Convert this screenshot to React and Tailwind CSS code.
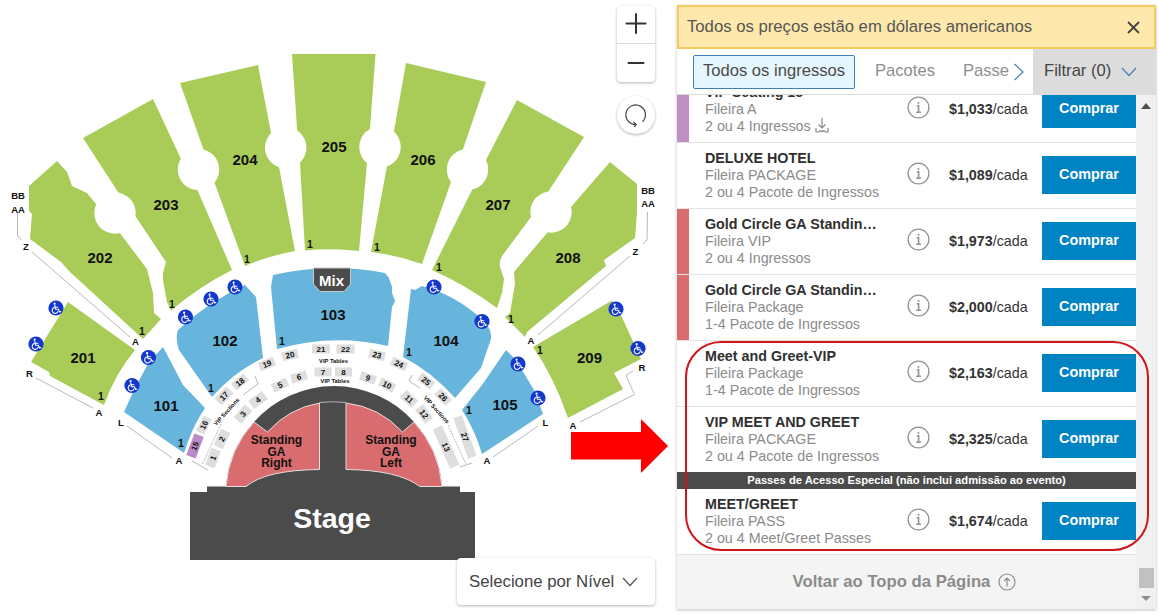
import { useState } from 'react';

const greenSections = [
  { id: '201', x: 83, y: 358, d: 'M68 302 L135 350 Q115 374 104 405 L50 376 L49 372 L31 362 Z' },
  { id: '202', x: 100, y: 258, d: 'M57 161 L67 172 L72 186 L87 193 L96 204 L119 232 L147 269 L153 293 L154 313 L161 319 L143 339 L70 272 L61 262 L30 239 L32 214 L29 211 L29 186 Z' },
  { id: '203', x: 166, y: 205, d: 'M153 99 L181 159 L197 189 L232 270 Q200 286 171 310.5 L167 302 L163 280 L163 273 L166 262 L136 217 L118 192 L83 138 Z' },
  { id: '204', x: 245, y: 160, d: 'M180 83 L258 65 L271 133 L279 167 L295 251 Q268 256 245 266 L215 184 L203 148 Z' },
  { id: '205', x: 334, y: 146.5, d: 'M292 54 L375.5 54 L370 128 L367 163 L359 251 Q332 248 305 250.5 L300 163 L297 128 Z' },
  { id: '206', x: 423, y: 160, d: 'M406 63 L486 82 L463 149 L451 182 L422 264 Q397 255 371 252 L387 166 L394 131 Z' },
  { id: '207', x: 498, y: 205, d: 'M517 100 L584 137 L548 192 L531 217 L502 256 Q499 261 500 267 L504 279 L502 293 L497 308 Q466 285 432 270 L472 190 L487 158 Z' },
  { id: '208', x: 568, y: 258, d: 'M610 162 L637 184 L637 213 L635 238 L604 260 L606 266 L527 332 L525 337 L505 317 L510 313 L515 284 L514 272 L547 233 L571 207 Z' },
  { id: '209', x: 589.5, y: 358, d: 'M611 301 L615 302 L641 359 L614 373 L623 389 L568 418 Q554 377 533 347 Z' },
];

const blueSections = [
  { id: '101', x: 166, y: 405.5, d: 'M163 347 L183 385 L205 408 Q192 427 184 453 L124 412 L134 390 L149 362 Z' },
  { id: '102', x: 225, y: 341, d: 'M178 330 Q208 302 245 285 L256 297 L263 358 Q234 372 212 397 L179 350 Q175 339 178 330 Z' },
  { id: '103', x: 333, y: 315, d: 'M273 275 Q330 262 385 273 L389 278 L392 287 L392 293 L395 301 L392 307 L388 346 Q333 333 277 349 L271 287 Z' },
  { id: '104', x: 446, y: 341, d: 'M411 289 L415 290 L422 286 Q456 295 484 321 Q492 330 491 339 L481 368 L455 398 Q432 372 403 357 Z' },
  { id: '105', x: 505, y: 405, d: 'M506 350 L516 360 L534 390 L543 414 L482 454 Q475 430 462 410 L482 385 Z' },
];

const alcoves = [
  [115, 213], [198.5, 169.5], [285.7, 147.7], [380, 147], [467.5, 169.5], [551, 212],
];

const accessible = [
  [56, 308], [36, 344], [148.5, 357.5], [132, 385.5], [185.5, 317], [211, 299], [235, 287],
  [434, 287], [482, 321.5], [518, 364], [538, 398], [616, 309], [638, 348.5],
];

const rowLabels = [
  ['BB', 18, 195], ['AA', 18, 209], ['Z', 26, 246], ['A', 135.5, 341], ['R', 29.5, 373], ['A', 99, 412],
  ['L', 121, 422], ['A', 179, 460], ['BB', 648, 190], ['AA', 648, 203], ['Z', 635.5, 251], ['A', 531, 340],
  ['R', 642, 367], ['A', 573, 425], ['L', 545.5, 422], ['A', 487, 460],
];

const firstRows = [
  [101, 396], [142, 331], [172, 304], [247, 259], [310, 244], [377, 247], [439, 267], [511, 319],
  [540, 350], [181, 443], [211, 388], [282, 341], [409, 352], [469, 410],
];

// number, centre x, centre y, rotation, box length, box height
const tables = [
  [1, 213, 458, -70, 18, 10], [2, 222, 439, -65, 18, 10], [3, 243, 414, -50, 17, 10], [4, 258, 400, -36, 17, 10],
  [5, 280, 385, -25, 16, 9], [6, 299, 377, -15, 16, 9], [7, 323, 372, 0, 17, 9], [8, 343.5, 372, 0, 17, 9],
  [9, 368, 378, 18, 16, 9], [10, 387, 385, 27, 16, 9], [11, 409, 399, 42, 16, 10], [12, 424, 414, 54, 17, 10],
  [13, 446, 447, 66, 43, 10], [27, 465, 437, 70, 43, 9], [26, 443, 397, 46, 16, 9], [25, 426, 381, 38, 16, 9],
  [24, 399, 364, 24, 16, 9], [23, 377, 355, 14, 16, 9], [22, 345.5, 349, 0, 18, 9], [21, 321, 349, 0, 18, 9],
  [20, 290, 355, -14, 16, 9], [19, 267, 364, -22, 16, 9], [18, 240, 382, -38, 16, 9], [17, 224, 396, -46, 17, 10],
  [16, 204, 425, -64, 17, 9], [15, 195, 446, -69, 23, 10],
];

const guides = [
  'M17.5 213 V235 L21 240', 'M32 252 L130 337', 'M36 378 L93 408', 'M127 426 L172 458',
  'M647.5 212 L647 240 L643 244', 'M630 256 L538 335', 'M633 371 L626 375.5 L634.5 394.5 L580 422', 'M538 426 L493 457',
  'M255 376 L258 384 L243 395', 'M192 461 L208 470', 'M412 375 L409 381 L420 388', 'M460 467 L472 463',
];

const tickets = [
  { title: 'VIP Seating 15', row: 'Fileira A', qty: '2 ou 4 Ingressos', price: '$1,033', color: 'bg-[#bf8fc4]', download: true },
  { title: 'DELUXE HOTEL', row: 'Fileira PACKAGE', qty: '2 ou 4 Pacote de Ingressos', price: '$1,089' },
  { title: 'Gold Circle GA Standin…', row: 'Fileira VIP', qty: '2 ou 4 Ingressos', price: '$1,973', color: 'bg-[#d86c6e]' },
  { title: 'Gold Circle GA Standin…', row: 'Fileira Package', qty: '1-4 Pacote de Ingressos', price: '$2,000', color: 'bg-[#d86c6e]' },
  { title: 'Meet and Greet-VIP', row: 'Fileira Package', qty: '1-4 Pacote de Ingressos', price: '$2,163' },
  { title: 'VIP MEET AND GREET', row: 'Fileira PACKAGE', qty: '2 ou 4 Pacote de Ingressos', price: '$2,325' },
];

const passes = [
  { title: 'MEET/GREET', row: 'Fileira PASS', qty: '2 ou 4 Meet/Greet Passes', price: '$1,674' },
];

function Chevron({ className }) {
  return (
    <svg className={className} width="16" height="10" viewBox="0 0 16 10" fill="none" stroke="currentColor" strokeWidth="1.2">
      <path d="M1 1 L8 8.5 L15 1" />
    </svg>
  );
}

function Wheelchair({ x, y }) {
  return (
    <g transform={`translate(${x} ${y})`}>
      <circle r="7.6" fill="#1437cc" />
      <g fill="none" stroke="#fff" strokeWidth="1.1" strokeLinecap="round" strokeLinejoin="round">
        <path d="M-1.2 -2.6 L-0.6 1.2 H2.4 L3.6 4 L4.8 3.5" />
        <path d="M-1 -0.8 H1.9" />
        <path d="M-2 -0.4 A3 3 0 1 0 2 3.4" />
      </g>
      <circle cx="-1.4" cy="-4.3" r="1.1" fill="#fff" />
    </g>
  );
}

function SeatMap() {
  return (
    <svg
      className="block font-['Liberation_Sans',Arial,sans-serif] font-bold"
      width="677"
      height="615"
      viewBox="0 0 677 615"
      textAnchor="middle"
      fill="#111"
    >
      {greenSections.map((s) => <path key={s.id} d={s.d} fill="#a9cc59" />)}
      {alcoves.map(([x, y]) => <circle key={x} cx={x} cy={y} r="20.7" fill="#fff" />)}
      {blueSections.map((s) => <path key={s.id} d={s.d} fill="#67b4dc" />)}

      <g fill="none" stroke="#9a9aa2" strokeWidth="0.7">
        {guides.map((d) => <path key={d} d={d} />)}
        <path d="M221 424 L202 465" strokeDasharray="2 1" />
        <path d="M448 425 L466 464" strokeDasharray="2 1" />
      </g>

      {/* mix booth */}
      <path d="M313.500 268 H350.500 V284 L344 291.500 H320 L313.500 284 Z" fill="#4b4b4b" stroke="#c9c9c9" strokeWidth="1" />
      <text x="331.500" y="285.500" fontSize="15" fill="#fff">Mix</text>

      {/* stage and standing areas */}
      <path d="M226 486.500 A108 108 0 0 1 254 422 A107 107 0 0 1 414 422 A108 108 0 0 1 442 486.500 L460 486.500 V492 H475 V560 H190 V492 H207 V486.500 Z" fill="#4b4b4b" />
      <g fill="#d86c6e" stroke="#e4dede" strokeWidth="1">
        <path d="M226 486.500 A108 108 0 0 1 254 422 L267.500 432 A91 91 0 0 1 319.500 403 V469.500 Q266 470 246 486.500 Z" />
        <path d="M442 486.500 A108 108 0 0 0 414 422 L402.500 432 A91 91 0 0 0 346 403 V469.500 Q398 470 420 486.500 Z" />
      </g>
      <path d="M319.500 402.500 Q333 401 346 402.500" fill="none" stroke="#ccc" strokeWidth="0.8" />
      <text x="332" y="528" fontSize="28.500" fill="#fff">Stage</text>
      <g fontSize="12">
        <text x="276.500" y="443.500">Standing</text>
        <text x="276.500" y="455.500">GA</text>
        <text x="276.500" y="467">Right</text>
        <text x="391" y="443.500">Standing</text>
        <text x="391" y="455.500">GA</text>
        <text x="391" y="467">Left</text>
      </g>

      {tables.map(([n, x, y, r, w, h]) => (
        <g key={n} transform={`translate(${x} ${y}) rotate(${r})`}>
          <rect x={-w / 2} y={-h / 2} width={w} height={h} fill={n === 15 ? '#b98cc6' : '#dedede'} />
          <text y="2.800" fontSize="8">{n}</text>
        </g>
      ))}
      <g fontSize="5.800">
        <text x="333.500" y="363">VIP Tables</text>
        <text x="335" y="383">VIP Tables</text>
        <text transform="translate(228 413) rotate(-48)">VIP Sections</text>
        <text transform="translate(435 411) rotate(48)">VIP Sections</text>
      </g>

      <g fontSize="15">
        {[...greenSections, ...blueSections].map((s) => (
          <text key={s.id} x={s.x} y={s.y + 5.3}>{s.id}</text>
        ))}
      </g>
      <g fontSize="9.500">
        {rowLabels.map(([t, x, y]) => <text key={`${t}${x}${y}`} x={x} y={y + 3.5}>{t}</text>)}
      </g>
      <g fontSize="10.500">
        {firstRows.map(([x, y]) => <text key={x} x={x} y={y + 4}>1</text>)}
      </g>

      {accessible.map(([x, y]) => <Wheelchair key={x} x={x} y={y} />)}

      <path d="M571 432 H641 V419 L668 446 L641 473 V459.500 H571 Z" fill="#fe0000" />
    </svg>
  );
}

function MapControls() {
  return (
    <div className="absolute left-[617px] top-1.5 flex w-[38px] flex-col gap-3.5">
      <div className="flex flex-col rounded bg-white shadow-[0_1px_3px_rgba(0,0,0,0.3)]">
        <button className="flex h-[38px] items-center justify-center border-b border-[#ddd]">
          <svg className="-mt-0.5" width="22" height="22" viewBox="0 0 22 22" stroke="#333" strokeWidth="2" strokeLinecap="round">
            <path d="M11 1 V20 M1.500 10.500 H20.500" />
          </svg>
        </button>
        <button className="flex h-[38px] items-center justify-center">
          <svg width="20" height="4" viewBox="0 0 20 4" stroke="#333" strokeWidth="2" strokeLinecap="round">
            <path d="M2.500 2 H17.500" />
          </svg>
        </button>
      </div>
      <button className="flex size-[38px] items-center justify-center rounded-full bg-white shadow-[0_1px_3px_rgba(0,0,0,0.3)]">
        <svg width="24" height="24" viewBox="0 0 24 24" fill="none" stroke="#444" strokeWidth="1.200">
          <path d="M18.500 18.800 A9.800 9.800 0 1 0 11.500 21.600" />
          <path d="M9.500 19 L12.300 21.500 L10 24" />
        </svg>
      </button>
    </div>
  );
}

function TicketRow({ ticket }) {
  return (
    <div className="flex h-[66px] shrink-0 border-b border-[#e3e3e3] bg-white">
      <div className={`w-3 shrink-0 ${ticket.color || ''}`} />
      <div className="ml-4 w-[203px] pt-[7px] text-[14.300px] leading-[17px] whitespace-nowrap text-[#8b8b8b]">
        <p className="font-bold text-[#303030]">{ticket.title}</p>
        <p>{ticket.row}</p>
        <p className="flex items-start gap-1">
          {ticket.qty}
          {ticket.download && (
            <svg width="14" height="15" viewBox="0 0 14 15" fill="none" stroke="#8b8b8b" strokeWidth="1.200">
              <path d="M7 0 V9.500 M3.500 6.500 L7 10 L10.500 6.500 M1 10 V14 H3.500 L5 12.500 M9 12.500 L10.500 14 H13 V10 M5 12.500 Q7 14.500 9 12.500" />
            </svg>
          )}
        </p>
      </div>
      <div className="flex flex-1 items-center">
        <svg className="-mt-1" width="23" height="23" viewBox="0 0 23 23" fill="none" stroke="#939393" strokeWidth="1.300">
          <circle cx="11.500" cy="11.500" r="10.400" />
          <path d="M9.800 9.800 H11.600 V16 M9.300 16.300 H14 M11.500 6 V7.800" strokeWidth="1.600" />
        </svg>
        <p className="ml-[19px] w-[93px] text-[14.300px] whitespace-nowrap text-[#333]">
          <b>{ticket.price}</b>/cada
        </p>
        <button className="-mt-px h-[38px] w-[94px] bg-[#0083c3] text-[14.400px] font-bold text-white">Comprar</button>
      </div>
    </div>
  );
}

export default function App() {
  const [showNotice, setShowNotice] = useState(true);

  return (
    <div className="flex h-[615px] w-[1159px] overflow-hidden bg-white font-['Liberation_Sans',Arial,sans-serif]">
      <main className="relative w-[677px] shrink-0">
        <SeatMap />
        <MapControls />
        <button className="absolute left-[457px] top-[558px] flex h-[47px] w-[198px] items-center rounded-sm bg-white pl-3 text-[16.750px] whitespace-nowrap text-[#444] shadow-[0_1px_3px_rgba(0,0,0,0.3)]">
          Selecione por Nível
          <Chevron className="ml-2 text-[#555]" />
        </button>
      </main>

      <aside className="relative mt-[5px] flex h-[604px] w-[479px] flex-col bg-white shadow-[0_1px_3px_rgba(0,0,0,0.25)]">
        {showNotice && (
          <div className="flex h-[44px] shrink-0 items-center justify-between border-2 border-[#f2cc5c] bg-[#ffe8ac] pr-3.5 pl-2 text-[16.700px] whitespace-nowrap text-[#555]">
            Todos os preços estão em dólares americanos
            <button onClick={() => setShowNotice(false)}>
              <svg width="13" height="13" viewBox="0 0 13 13" stroke="#444" strokeWidth="1.800">
                <path d="M1 1 L12 12 M12 1 L1 12" />
              </svg>
            </button>
          </div>
        )}

        <div className="flex h-[46px] shrink-0 border-b border-[#ddd] text-[16.600px] whitespace-nowrap text-[#8e8e8e]">
          <div className="flex flex-1 items-center pl-4">
            <button className="h-[34px] w-[162px] rounded-xs border border-[#3f7fae] bg-[#e6f6fe] text-[#4a4a4a]">Todos os ingressos</button>
            <button className="ml-5">Pacotes</button>
            <button className="ml-7 w-[46px] overflow-hidden text-left">Passe</button>
            <svg className="ml-1" width="12" height="18" viewBox="0 0 12 18" fill="none" stroke="#4b8bc0" strokeWidth="1.400">
              <path d="M1.500 1 L10 9 L1.500 17" />
            </svg>
          </div>
          <button className="flex w-[123px] shrink-0 items-center bg-[#dcdcdc] pl-[11px] text-[#444]">
            Filtrar (0)
            <Chevron className="ml-2.5 text-[#4b7fb5]" />
          </button>
        </div>

        <div className="flex min-h-0 flex-1">
          <div className="flex flex-1 flex-col overflow-hidden">
            <div className="-mt-[18px] flex flex-col">
              {tickets.map((ticket, i) => <TicketRow key={i} ticket={ticket} />)}
              <p className="-mt-px h-[17px] bg-[#4b4b4b] text-center text-[11.200px] leading-[17px] font-bold text-white">
                Passes de Acesso Especial (não inclui admissão ao evento)
              </p>
              {passes.map((ticket) => <TicketRow key={ticket.title} ticket={ticket} />)}
            </div>
            <button className="flex flex-1 items-center justify-center gap-2 bg-[#f4f4f4] pr-1 text-[16.700px] font-bold text-[#8b8b8b]">
              Voltar ao Topo da Página
              <svg width="18" height="18" viewBox="0 0 18 18" fill="none" stroke="#8b8b8b" strokeWidth="1.200">
                <circle cx="9" cy="9" r="8" />
                <path d="M9 13.500 V5 M6 8 L9 5 L12 8" />
              </svg>
            </button>
          </div>
          <div className="flex w-5 flex-col items-center bg-[#f1f1f1] pt-2 pb-2">
            <div className="border-x-[5px] border-b-[6px] border-x-transparent border-b-[#505050]" />
            <div className="mt-auto mb-2 h-5 w-[15px] bg-[#c1c1c1]" />
            <div className="border-x-[5px] border-t-[5px] border-x-transparent border-t-[#8d8d8d]" />
          </div>
        </div>

        {/* highlighted offers */}
        <div className="pointer-events-none absolute top-[336px] left-2 h-[210px] w-[464px] rounded-[36px] border-2 border-[#d0141b]" />
      </aside>
    </div>
  );
}
